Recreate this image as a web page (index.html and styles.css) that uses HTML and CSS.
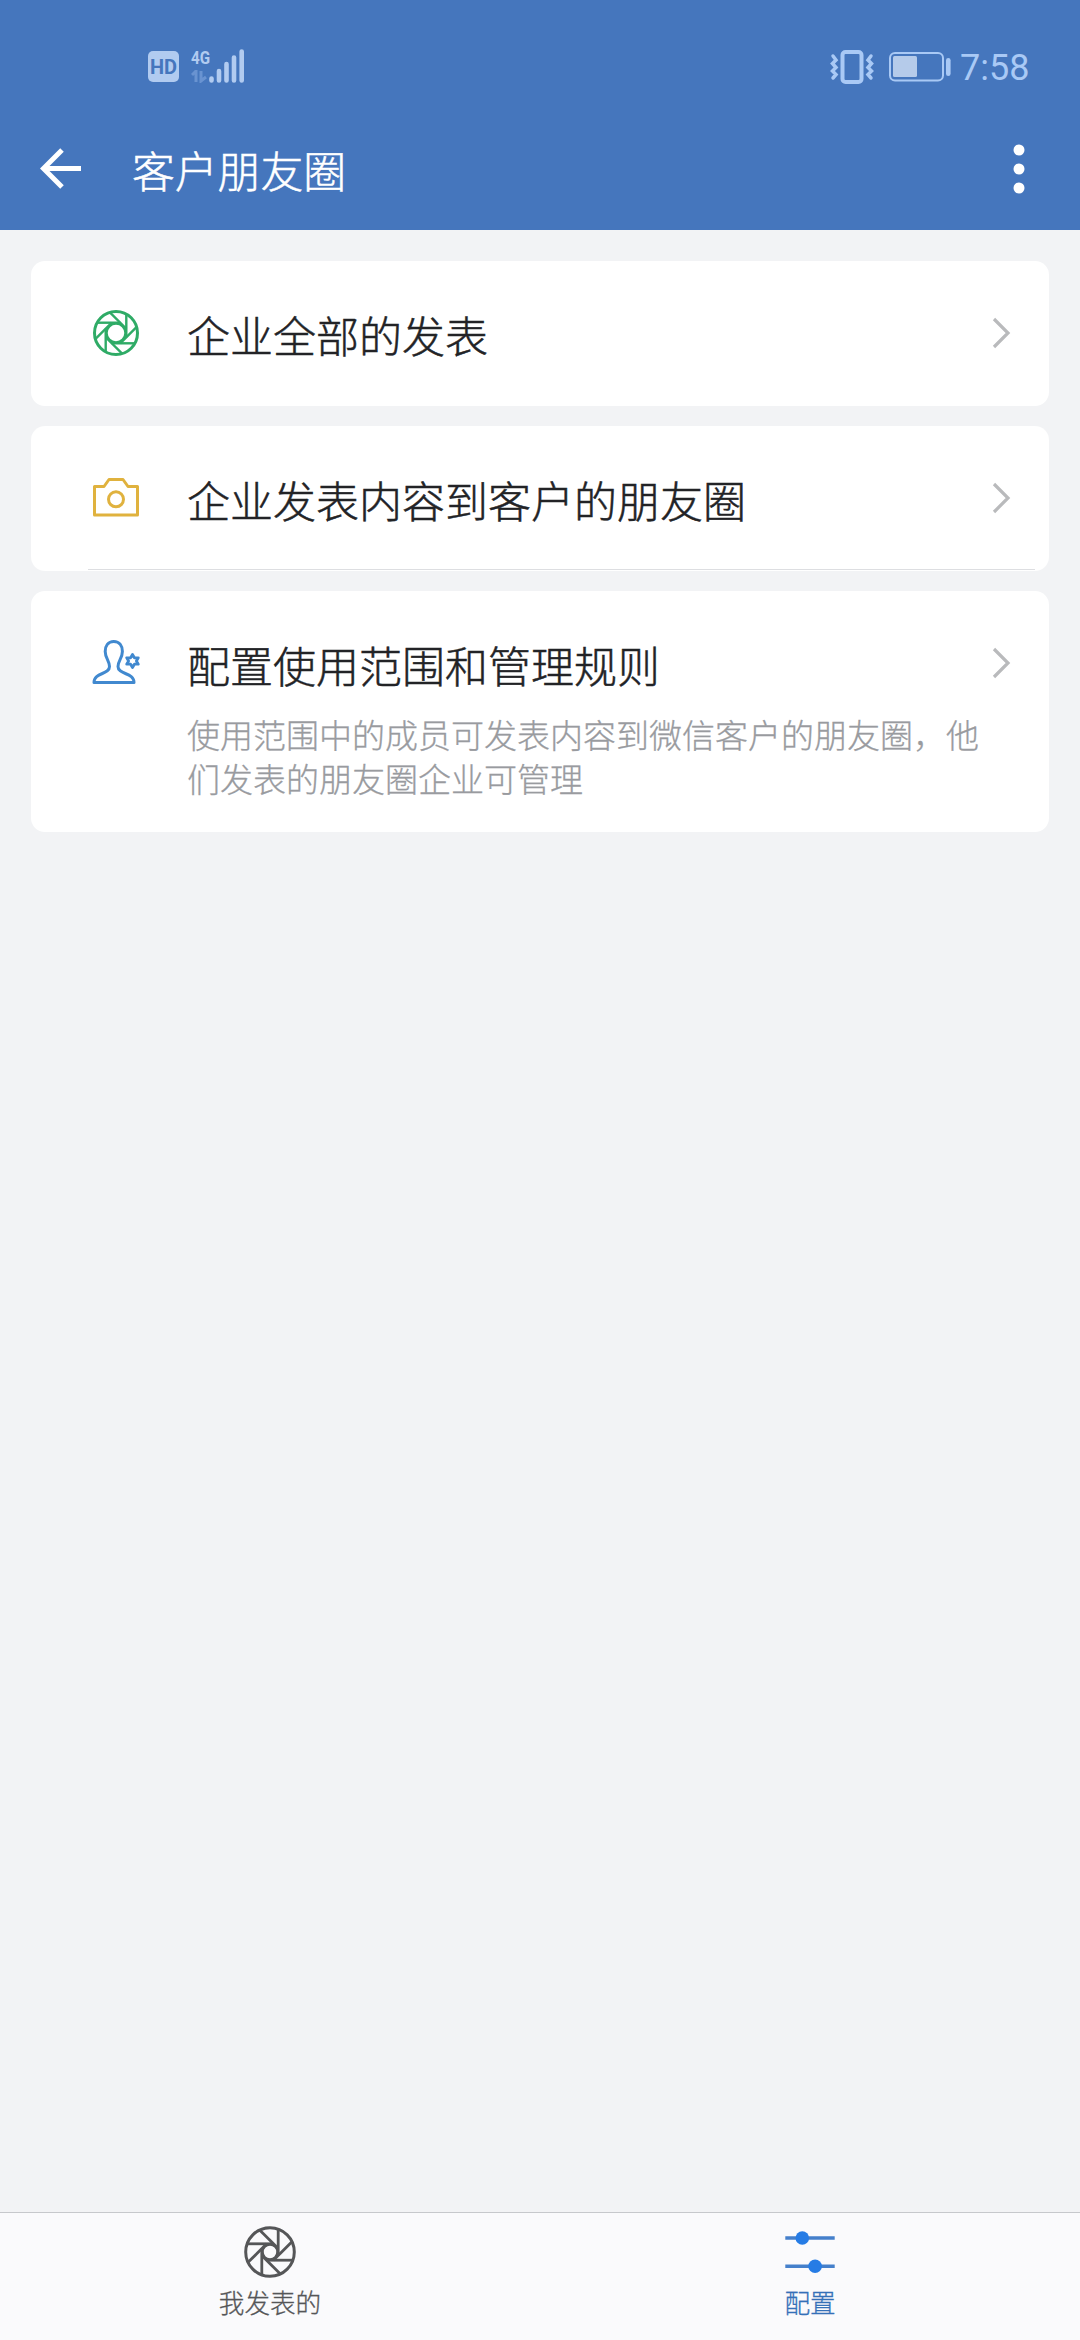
FILE: index.html
```html
<!DOCTYPE html>
<html lang="zh-CN">
<head>
<meta charset="utf-8">
<title>客户朋友圈</title>
<link rel="stylesheet" href="styles.css">
</head>
<body>
<div class="screen">
  <header class="header">
    <div class="status">
      <div class="status-left">
        <span class="hd">HD</span>
        <div class="network">
          <span class="gen">4G</span>
          <svg class="data" width="17" height="13" viewBox="0 0 17 13"><path d="M1 5L5 1V12M10 1V11L15 7" fill="none" stroke="currentColor" stroke-width="3"/></svg>
        </div>
        <svg class="signal" width="36" height="34" viewBox="0 0 36 34"><path d="M2.500 29.500V31.500M10 22V31.500M17.500 15V31.500M25 8.500V31.500M32.700 2.500V31.500" fill="none" stroke="currentColor" stroke-width="4.600" stroke-linecap="round"/></svg>
      </div>
      <div class="status-right">
        <svg width="44" height="34" viewBox="0 0 44 34" fill="none" stroke="currentColor"><rect x="12.500" y="2" width="19" height="30" rx="3" stroke-width="4"/><path d="M3 6L6 10L2.500 13.500L6 17.500L2.500 21L6 24.500L3 28M41 6L38 10L41.500 13.500L38 17.500L41.500 21L38 24.500L41 28" stroke-width="3.500" stroke-linecap="round"/></svg>
        <svg class="battery" width="62" height="30" viewBox="0 0 62 30"><rect x="1" y="1" width="53" height="27.500" rx="5" fill="none" stroke="currentColor" stroke-width="2"/><rect x="4" y="4" width="24" height="21" rx="1.500" fill="#b5cbea"/><rect x="57" y="6" width="4.600" height="18" rx="2.300" fill="currentColor"/></svg>
        <span class="time">7:58</span>
      </div>
    </div>
    <div class="navbar">
      <svg class="back" width="42" height="42" viewBox="0 0 42 42"><path d="M41 20.500H4M22 2L3.500 20.500L22 39" fill="none" stroke="#fff" stroke-width="5"/></svg>
      <h1 class="title">客户朋友圈</h1>
      <svg class="more" width="12" height="50" viewBox="0 0 12 50" fill="#fff"><circle cx="6" cy="6" r="5.500"/><circle cx="6" cy="25" r="5.500"/><circle cx="6" cy="44" r="5.500"/></svg>
    </div>
  </header>

  <main class="list">
    <section class="card">
      <svg class="icon green" width="50" height="50" viewBox="-25 -25 50 50" fill="none" stroke="currentColor">
        <circle r="21.500" stroke-width="3"/><circle r="9.500" stroke-width="2.500"/>
        <g stroke-width="2.400"><path id="blade" d="M10.300-19V4.300"/><use href="#blade" transform="rotate(45)"/><use href="#blade" transform="rotate(90)"/><use href="#blade" transform="rotate(135)"/><use href="#blade" transform="rotate(180)"/><use href="#blade" transform="rotate(225)"/><use href="#blade" transform="rotate(270)"/><use href="#blade" transform="rotate(315)"/></g>
      </svg>
      <div class="content"><h2 class="label">企业全部的发表</h2></div>
      <svg class="chevron" width="20" height="32" viewBox="0 0 20 32"><path d="M2 2L16 16L2 30" fill="none" stroke="currentColor" stroke-width="3.200"/></svg>
    </section>

    <section class="card underlined">
      <svg class="icon yellow" width="50" height="50" viewBox="-25 -25 50 50" fill="none" stroke="currentColor" stroke-width="3" stroke-linejoin="round">
        <path d="M-21.500-11.500H-12L-7-18.500H7L12-11.500H21.500V17H-21.500Z"/><circle cy="1.300" r="7.500"/>
      </svg>
      <div class="content"><h2 class="label">企业发表内容到客户的朋友圈</h2></div>
      <svg class="chevron" width="20" height="32" viewBox="0 0 20 32"><path d="M2 2L16 16L2 30" fill="none" stroke="currentColor" stroke-width="3.200"/></svg>
    </section>

    <section class="card tall">
      <svg class="icon blue" width="50" height="50" viewBox="-24 -25 50 50" fill="none" stroke="currentColor" stroke-width="3" stroke-linejoin="round">
        <path d="M-1.200-21.500C-7-21.500-9.800-17-9.800-11.500C-9.800-5-5.500-2-5.500 3.500C-5.500 12-21 9-21 19.500H19C19 9 3 12 3 3.500C3-2 7.400-5 7.400-11.500C7.400-17 4.600-21.500-1.200-21.500Z"/>
        <path d="M17.500-8.500L19.400-5.200H23.300L21.400-2L23.300 1.200H19.400L17.500 4.500L15.600 1.200H11.700L13.600-2L11.700-5.200H15.600Z" stroke-width="2.800"/>
      </svg>
      <div class="content">
        <h2 class="label">配置使用范围和管理规则</h2>
        <p class="desc">使用范围中的成员可发表内容到微信客户的朋友圈，他们发表的朋友圈企业可管理</p>
      </div>
      <svg class="chevron" width="20" height="32" viewBox="0 0 20 32"><path d="M2 2L16 16L2 30" fill="none" stroke="currentColor" stroke-width="3.200"/></svg>
    </section>
  </main>

  <nav class="tabs">
    <div class="tab">
      <svg width="54" height="54" viewBox="-27 -27 54 54" fill="none" stroke="currentColor">
        <circle r="24.300" stroke-width="3"/><circle r="7.500" stroke-width="2.500"/>
        <g stroke-width="2.800"><path id="vane" d="M8.200-22.500V3.400"/><use href="#vane" transform="rotate(45)"/><use href="#vane" transform="rotate(90)"/><use href="#vane" transform="rotate(135)"/><use href="#vane" transform="rotate(180)"/><use href="#vane" transform="rotate(225)"/><use href="#vane" transform="rotate(270)"/><use href="#vane" transform="rotate(315)"/></g>
      </svg>
      <span class="tab-label">我发表的</span>
    </div>
    <div class="tab active">
      <svg width="54" height="54" viewBox="-27 -27 54 54"><path d="M-24.700-14H24.700M-24.700 14.200H24.700" stroke="#4580cb" stroke-width="3.600"/><circle cx="-7.700" cy="-14" r="6.800" fill="#267ce5"/><circle cx="5.100" cy="14.200" r="6.800" fill="#267ce5"/></svg>
      <span class="tab-label">配置</span>
    </div>
  </nav>
</div>
</body>
</html>
```

FILE: styles.css
```css
* { box-sizing: border-box; }
body, h1, h2, p { margin: 0; font-weight: 300; }
svg { display: block; flex: none; }
body {
  font-family: "Noto Sans CJK SC", sans-serif;
  background: #f2f3f5;
}
.screen {
  width: 1080px;
  height: 2340px;
  display: flex;
  flex-direction: column;
}
.header {
  height: 230px;
  background: #4576bd;
  color: #a9c9f5;
}
.status {
  height: 116px;
  padding: 0 51px 0 148px;
  display: flex;
  justify-content: space-between;
}
.status-left, .status-right { display: flex; align-items: flex-start; }
.status-left { padding-top: 49px; }
.hd {
  margin-top: 2px;
  width: 31px;
  height: 31px;
  border-radius: 5px;
  background: #b1cbf0;
  color: #4576bd;
  font: 700 20px/32px Roboto, sans-serif;
  text-align: center;
}
.network { width: 18px; margin-left: 12px; color: #b1cbf0; }
.gen {
  display: block;
  height: 21px;
  font: 700 19px/17px Roboto, sans-serif;
  transform: scaleX(.8);
  transform-origin: left;
}
.data { color: #6993d1; }
.signal { color: #b1cbf0; }
.status-right { padding-top: 50px; }
.battery { margin: 2px 0 0 15px; }
.time {
  margin: 1px 0 0 9px;
  font: 400 36px/34px Roboto, sans-serif;
  width: 69px;
  white-space: nowrap;
}
.navbar {
  height: 114px;
  padding: 0 55px 0 40px;
  display: flex;
  align-items: flex-start;
}
.back { margin-top: 32px; }
.title {
  flex: 1;
  margin-left: 50px;
  padding-top: 21px;
  color: #fff;
  font-size: 42.8px;
  line-height: 64px;
  -webkit-text-stroke: .5px currentColor;
}
.more { margin-top: 28px; }
.list {
  flex: 1;
  padding: 31px 31px 0;
  display: flex;
  flex-direction: column;
  gap: 20px;
}
.card {
  height: 145px;
  padding: 0 37px 0 60px;
  display: flex;
  align-items: flex-start;
  background: #fff;
  border-radius: 14px;
}
.icon { margin-top: 47px; }
.green { color: #2fab66; }
.yellow { color: #e0b23e; }
.blue { color: #4189cf; }
.content { flex: 1; padding: 41px 0 0 46px; }
.label {
  color: #222326;
  font-size: 43px;
  line-height: 64px;
  -webkit-text-stroke: .5px currentColor;
}
.chevron { margin-top: 56px; color: #b9babc; }
.underlined {
  background: linear-gradient(#dddee1, #dddee1) 57px 143px / 947px 1px no-repeat #fff;
}
.tall { height: 241px; }
.desc {
  width: 800px;
  margin-top: 16px;
  color: #999b9f;
  font-size: 33px;
  line-height: 44px;
  -webkit-text-stroke: .3px currentColor;
}
.tabs {
  height: 128px;
  border-top: 1px solid #c6c8cc;
  background: #fafafc;
  display: flex;
}
.tab {
  flex: 1;
  padding-top: 12px;
  display: flex;
  flex-direction: column;
  align-items: center;
  color: #555658;
}
.active { color: #3570b8; }
.tab-label {
  margin-top: 4px;
  font-size: 25.6px;
  line-height: 38px;
  font-weight: 300;
  -webkit-text-stroke: .3px currentColor;
}
```
